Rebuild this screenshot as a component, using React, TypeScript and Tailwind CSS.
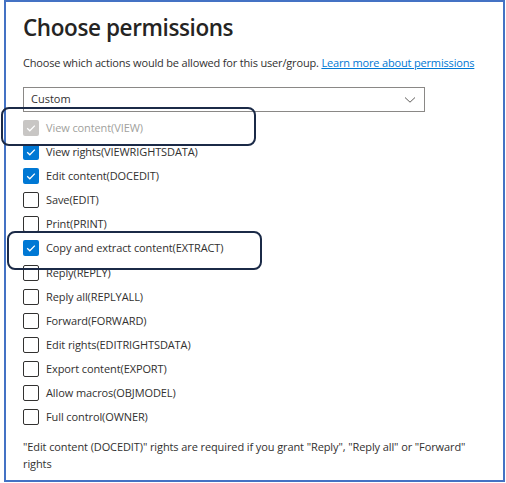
import React from "react";

type Perm = { label: string; state: "disabled" | "checked" | "empty" };

const perms: Perm[] = [
  { label: "View content(VIEW)", state: "disabled" },
  { label: "View rights(VIEWRIGHTSDATA)", state: "checked" },
  { label: "Edit content(DOCEDIT)", state: "checked" },
  { label: "Save(EDIT)", state: "empty" },
  { label: "Print(PRINT)", state: "empty" },
  { label: "Copy and extract content(EXTRACT)", state: "checked" },
  { label: "Reply(REPLY)", state: "empty" },
  { label: "Reply all(REPLYALL)", state: "empty" },
  { label: "Forward(FORWARD)", state: "empty" },
  { label: "Edit rights(EDITRIGHTSDATA)", state: "empty" },
  { label: "Export content(EXPORT)", state: "empty" },
  { label: "Allow macros(OBJMODEL)", state: "empty" },
  { label: "Full control(OWNER)", state: "empty" },
];

const Check = () => (
  <svg width="12" height="12" viewBox="0 0 12 12" fill="none">
    <path d="M2.2 6.3 L4.8 8.8 L9.8 3.6" stroke="#fff" strokeWidth="1.3" />
  </svg>
);

const Box: React.FC<{ state: Perm["state"] }> = ({ state }) => {
  if (state === "checked")
    return (
      <span className="flex h-[16px] w-[16px] items-center justify-center rounded-[2px] bg-[#0078d4]">
        <Check />
      </span>
    );
  if (state === "disabled")
    return (
      <span className="flex h-[16px] w-[16px] items-center justify-center rounded-[2px] bg-[#c8c6c4]">
        <Check />
      </span>
    );
  return <span className="h-[16px] w-[16px] rounded-[2px] border border-[#323130] bg-white" />;
};

export default function App() {
  return (
    <div
      className="relative h-[483px] w-[506px] overflow-hidden bg-white"
      style={{ fontFamily: '"Open Sans", "Noto Sans", sans-serif' }}
    >
      <div className="ml-[4px] h-[482px] w-[501px] border-2 border-[#4472c4] pl-[17px] text-[#323130]">
        {/* title */}
        <h1 className="mt-[10px] text-[22.5px] leading-[32px] font-semibold tracking-[-0.4px] text-[#252423]">
          Choose permissions
        </h1>

        {/* description */}
        <p className="mt-[11px] text-[11px] leading-[16px] tracking-[-0.17px]">
          Choose which actions would be allowed for this user/group.{" "}
          <a className="text-[#0078d4] underline">Learn more about permissions</a>
        </p>

        {/* dropdown */}
        <div className="mt-[16px] flex h-[25px] w-[402px] items-center justify-between border border-[#8a8886] pr-[8px] pl-[7px] text-[11px]">
          <span>Custom</span>
          <svg width="12" height="8" viewBox="0 0 12 8" fill="none">
            <path d="M1 1.5 L6 6.2 L11 1.5" stroke="#605e5c" strokeWidth="1" />
          </svg>
        </div>

        {/* permission list */}
        <div className="mt-[8px] flex flex-col gap-[8.1px]">
          {perms.map((p) => (
            <div key={p.label} className="flex h-[16px] items-center gap-[7px]">
              <Box state={p.state} />
              <span
                className={`text-[11px] leading-[16px] tracking-[-0.1px] ${
                  p.state === "disabled" ? "text-[#a19f9d]" : "text-[#323130]"
                }`}
              >
                {p.label}
              </span>
            </div>
          ))}
        </div>

        {/* footer note */}
        <p className="mt-[13px] w-[470px] text-[11px] leading-[17px] tracking-[-0.1px]">
          "Edit content (DOCEDIT)" rights are required if you grant "Reply", "Reply all" or
          "Forward" rights
        </p>
      </div>

      {/* annotation outlines */}
      <div className="absolute top-[107px] left-[1px] h-[39px] w-[255px] rounded-[8px] border-2 border-[#1b2a47]" />
      <div className="absolute top-[231px] left-[7px] h-[39px] w-[255px] rounded-[8px] border-2 border-[#1b2a47]" />
    </div>
  );
}
